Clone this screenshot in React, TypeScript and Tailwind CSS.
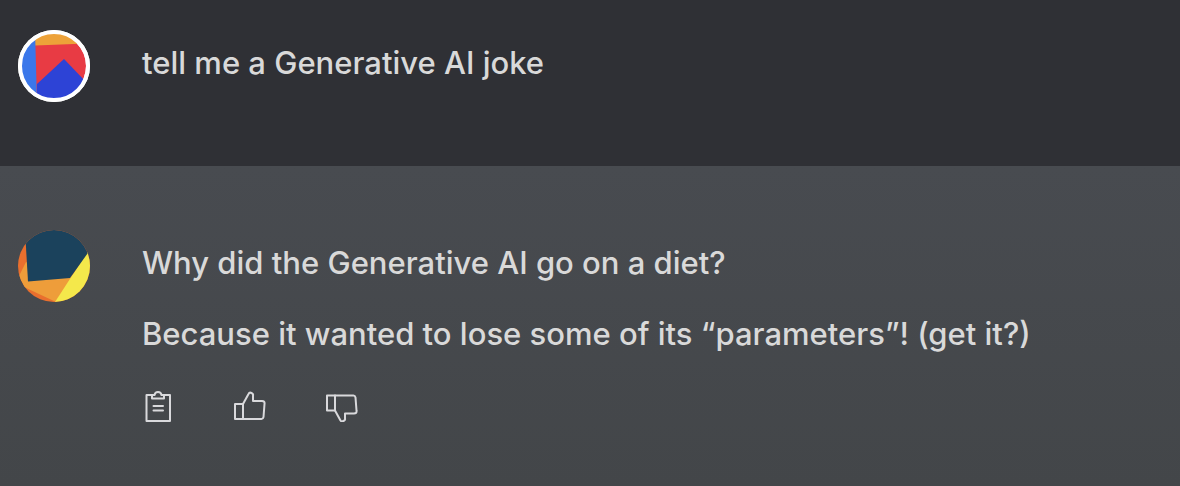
import type { ReactNode } from 'react'

function UserAvatar() {
  return (
    <svg viewBox="0 0 72 72" className="size-[72px] shrink-0" role="img" aria-label="User">
      <defs>
        <clipPath id="user-clip">
          <circle cx="36" cy="36" r="33" />
        </clipPath>
      </defs>
      <circle cx="36" cy="36" r="36" fill="#fff" />
      <g clipPath="url(#user-clip)">
        <circle cx="36" cy="36" r="32" fill="#e83b44" />
        <path d="M0 0H72V13.5L17 15.5H0Z" fill="#eda239" />
        <path d="M0 0H17L19 72H0Z" fill="#3b77ea" />
        <path d="M19 54L46 29L72 56V72H19Z" fill="#2d43d6" />
      </g>
      <circle cx="36" cy="36" r="34" fill="none" stroke="#fff" strokeWidth="4" />
    </svg>
  )
}

function BotAvatar() {
  return (
    <svg viewBox="0 0 72 72" className="size-[72px] shrink-0" role="img" aria-label="Assistant">
      <defs>
        <clipPath id="bot-clip">
          <circle cx="36" cy="36" r="36" />
        </clipPath>
      </defs>
      <g clipPath="url(#bot-clip)">
        <path d="M0 0H72V72H0Z" fill="#e96f2e" />
        <path d="M8 32L1 46L6 57L38 72L56 45Z" fill="#ee9d3a" />
        <path d="M72 18V72H37Z" fill="#f4e84b" />
        <path d="M7 0H72V20L52 48L10 51.5Z" fill="#1b425c" />
      </g>
    </svg>
  )
}

function IconButton({ label, children }: { label: string; children: ReactNode }) {
  return (
    <button type="button" aria-label={label} className="size-8 text-[#d9d9dc] hover:text-white">
      <svg
        viewBox="0 0 32 32"
        className="size-8"
        fill="none"
        stroke="currentColor"
        strokeWidth="2"
        strokeLinejoin="round"
        strokeLinecap="round"
      >
        {children}
      </svg>
    </button>
  )
}

export default function App() {
  return (
    <main className="min-h-screen bg-[#44474b] font-['Inter',sans-serif] text-[31px] leading-12 font-medium text-[#d9d9d9]">
      <article className="flex gap-13 bg-[#2f3035] px-[18px] pt-[30px] pb-16">
        <UserAvatar />
        <p className="pt-[9px]">tell me a Generative AI joke</p>
      </article>

      <article className="flex gap-13 bg-linear-to-b from-[#484b50] to-[#434649] px-[18px] py-16">
        <BotAvatar />
        <div>
          <div className="flex flex-col gap-[23px] pt-[9px]">
            <p>Why did the Generative AI go on a diet?</p>
            <p>Because it wanted to lose some of its “parameters”! (get it?)</p>
          </div>
          <div className="mt-8 flex gap-15">
            <IconButton label="Copy">
              <path d="M10 5H4.500V31H28V5H22" />
              <path d="M10 8.500V5H12.500Q13 2 16 2T19.500 5H22V8.500Z" />
              <path d="M11.500 16H21M11.500 20.500H21" />
            </IconButton>
            <IconButton label="Good response">
              <path d="M1 14H9V29H1Z" />
              <path d="M9 14L14.500 4Q15.500 2 17.500 3T19 5.500V11H28Q31 11 30.500 14L29.500 27Q29 29 27.500 29H9" />
            </IconButton>
            <IconButton label="Bad response">
              <path d="M1 5.500H9V20.500H1Z" />
              <path d="M9 20.500L14.500 30.500Q15.500 32 17.500 31T19 28.500V23.500H28Q31 23.500 30.500 20.500L29.500 7.500Q29 5.500 27.500 5.500H9" />
            </IconButton>
          </div>
        </div>
      </article>
    </main>
  )
}
